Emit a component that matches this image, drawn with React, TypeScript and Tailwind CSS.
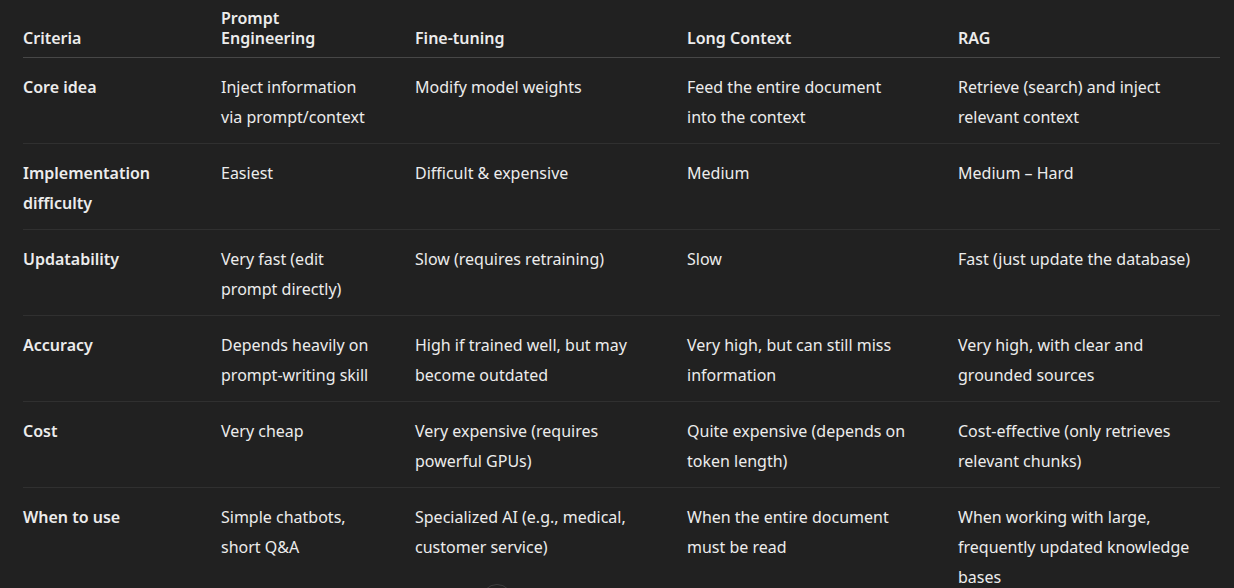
const rows: { label: string[]; cells: string[][] }[] = [
  {
    label: ["Core idea"],
    cells: [
      ["Inject information", "via prompt/context"],
      ["Modify model weights"],
      ["Feed the entire document", "into the context"],
      ["Retrieve (search) and inject", "relevant context"],
    ],
  },
  {
    label: ["Implementation", "difficulty"],
    cells: [["Easiest"], ["Difficult & expensive"], ["Medium"], ["Medium – Hard"]],
  },
  {
    label: ["Updatability"],
    cells: [
      ["Very fast (edit", "prompt directly)"],
      ["Slow (requires retraining)"],
      ["Slow"],
      ["Fast (just update the database)"],
    ],
  },
  {
    label: ["Accuracy"],
    cells: [
      ["Depends heavily on", "prompt-writing skill"],
      ["High if trained well, but may", "become outdated"],
      ["Very high, but can still miss", "information"],
      ["Very high, with clear and", "grounded sources"],
    ],
  },
  {
    label: ["Cost"],
    cells: [
      ["Very cheap"],
      ["Very expensive (requires", "powerful GPUs)"],
      ["Quite expensive (depends on", "token length)"],
      ["Cost-effective (only retrieves", "relevant chunks)"],
    ],
  },
  {
    label: ["When to use"],
    cells: [
      ["Simple chatbots,", "short Q&A"],
      ["Specialized AI (e.g., medical,", "customer service)"],
      ["When the entire document", "must be read"],
      ["When working with large,", "frequently updated knowledge", "bases"],
    ],
  },
];

const headers = [["Criteria"], ["Prompt", "Engineering"], ["Fine-tuning"], ["Long Context"], ["RAG"]];
const colWidths = ["w-[198px]", "w-[194px]", "w-[272px]", "w-[271px]", "w-[262px]"];

const Lines = ({ lines }: { lines: string[] }) => (
  <>
    {lines.map((l, i) => (
      <div key={i} className="whitespace-nowrap">
        {l}
      </div>
    ))}
  </>
);

export default function App() {
  return (
    <div
      className="relative h-[588px] w-[1234px] overflow-hidden bg-[#212121] text-[#ececec]"
      style={{ fontFamily: '"Noto Sans", "Open Sans", sans-serif' }}
    >
      <div className="ml-[23px] w-[1197px]">
        {/* header */}
        <div className="flex border-b border-[#474747] pt-[8px] pb-[9px] text-[16px] font-semibold leading-[20px]">
          {headers.map((h, i) => (
            <div key={i} className={`${colWidths[i]} flex flex-col justify-end`}>
              <Lines lines={h} />
            </div>
          ))}
        </div>

        {/* body rows */}
        {rows.map((r, ri) => (
          <div
            key={ri}
            className="flex border-b border-[#303030] pt-[14px] pb-[11px] text-[16px] leading-[30px]"
          >
            <div className={`${colWidths[0]} font-semibold`}>
              <Lines lines={r.label} />
            </div>
            {r.cells.map((c, ci) => (
              <div key={ci} className={colWidths[ci + 1]}>
                <Lines lines={c} />
              </div>
            ))}
          </div>
        ))}
      </div>

      {/* scroll-down button peeking at the bottom */}
      <div className="absolute left-[481px] top-[584px] h-8 w-8 rounded-full border border-[#3d3d3d] bg-[#212121]" />
    </div>
  );
}
